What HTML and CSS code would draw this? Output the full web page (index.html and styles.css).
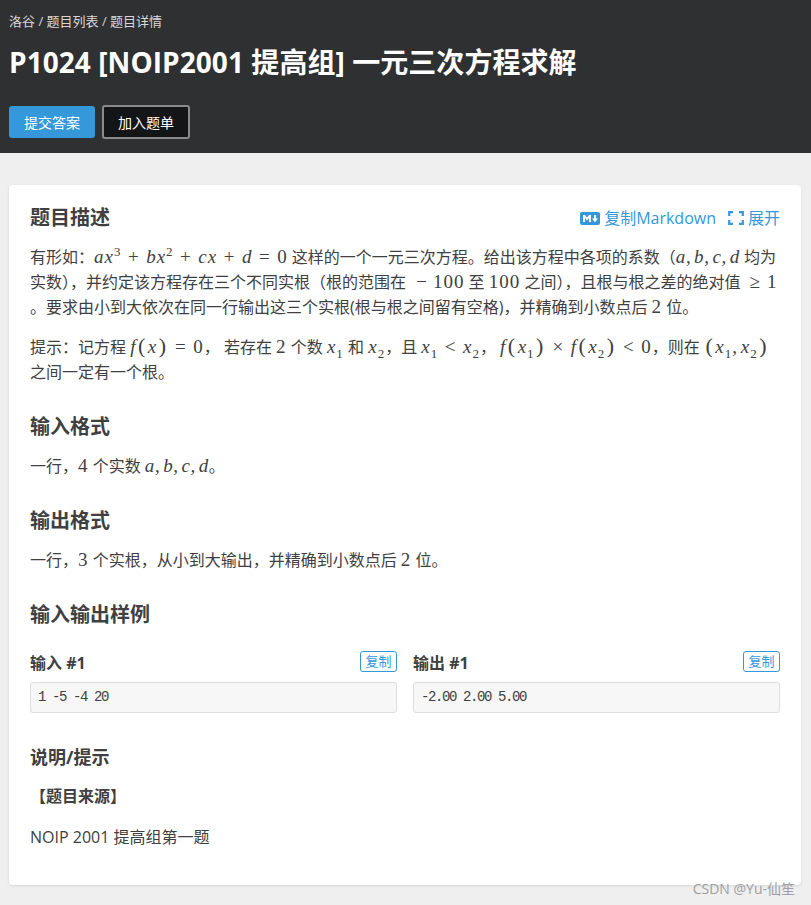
FILE: index.html
```html
<!DOCTYPE html>
<html lang="zh-CN">
<head>
    <meta charset="UTF-8">
    <meta name="viewport" content="width=device-width, initial-scale=1.0">
    <title>P1024 一元三次方程求解</title>
    <link rel="stylesheet" href="styles.css">
</head>
<body>
    <header class="top">
        <div class="crumbs">洛谷 / 题目列表 / 题目详情</div>
        <h1>P1024 [NOIP2001 提高组] 一元三次方程求解</h1>
        <div class="top-buttons">
            <button class="btn btn-blue">提交答案</button>
            <button class="btn btn-dark">加入题单</button>
        </div>
    </header>

    <main class="card">
        <div class="title-row">
            <h2>题目描述</h2>
            <div class="tools">
                <span class="tool">
                    <svg class="md-icon" width="20" height="13" viewBox="0 0 20 13">
                        <rect width="20" height="13" rx="2" fill="#3498db"/>
                        <path d="M3 10V3h2l2 2.5L9 3h2v7H9V6L7 8.5 5 6v4z" fill="#fff"/>
                        <path d="M14 3h2v3.5h2l-3 3.7-3-3.7h2z" fill="#fff"/>
                    </svg>
                    复制Markdown
                </span>
                <span class="tool">
                    <svg width="16" height="14" viewBox="0 0 16 14">
                        <path d="M5 1.2H1.2V5M11 1.2h3.8V5M5 12.8H1.2V9M11 12.8h3.8V9" fill="none" stroke="#3498db" stroke-width="2.2"/>
                    </svg>
                    展开
                </span>
            </div>
        </div>
        <p>有形如&#65306;<span class="m">ax<sup>3</sup><b>+</b>bx<sup>2</sup><b>+</b>cx<b>+</b>d<b>=</b><i>0</i></span> 这样的一个一元三次方程。给出该方程中各项的系数&#65288;<span class="m tight">a, b, c, d</span> 均为<br>实数&#65289;&#65292;并约定该方程存在三个不同实根&#65288;根的范围在 <span class="m"><b class="neg">−</b><i>100</i></span> 至 <span class="m"><i>100</i></span> 之间&#65289;&#65292;且根与根之差的绝对值 <span class="m"><b class="rel">≥</b><i>1</i></span><br>。要求由小到大依次在同一行输出这三个实根(根与根之间留有空格)&#65292;并精确到小数点后 <span class="m"><i>2</i></span> 位。</p>
        <p>提示&#65306;记方程 <span class="m">f<i class="p">(</i>x<i class="p">)</i><b>=</b><i>0</i></span>&#65292; 若存在 <span class="m"><i>2</i></span> 个数 <span class="m">x<sub>1</sub></span> 和 <span class="m">x<sub>2</sub></span>&#65292;且 <span class="m">x<sub>1</sub><b>&lt;</b>x<sub>2</sub></span>&#65292; <span class="m">f<i class="p">(</i>x<sub>1</sub><i class="p">)</i><b>×</b>f<i class="p">(</i>x<sub>2</sub><i class="p">)</i><b>&lt;</b><i>0</i></span>&#65292;则在 <span class="m"><i class="p">(</i>x<sub>1</sub>, x<sub>2</sub><i class="p">)</i></span><br>之间一定有一个根。</p>

        <h2>输入格式</h2>
        <p>一行&#65292;<span class="m"><i>4</i></span> 个实数 <span class="m tight">a, b, c, d</span>。</p>

        <h2>输出格式</h2>
        <p>一行&#65292;<span class="m"><i>3</i></span> 个实根&#65292;从小到大输出&#65292;并精确到小数点后 <span class="m"><i>2</i></span> 位。</p>

        <h2 class="sample-title">输入输出样例</h2>
        <div class="samples">
            <div class="sample">
                <div class="sample-head">
                    <h3>输入 #1</h3>
                    <span class="copy">复制</span>
                </div>
                <pre>1 -5 -4 20</pre>
            </div>
            <div class="sample">
                <div class="sample-head">
                    <h3>输出 #1</h3>
                    <span class="copy">复制</span>
                </div>
                <pre>-2.00 2.00 5.00</pre>
            </div>
        </div>

        <h2 class="small-h">说明/提示</h2>
        <p class="source"><strong>【题目来源】</strong></p>
        <p>NOIP 2001 提高组第一题</p>
    </main>

    <div class="watermark">CSDN @Yu-仙笙</div>
</body>
</html>
```

FILE: styles.css
```css
/* base */
body {
    margin: 0;
    position: relative;
    min-height: 905px;
    background: #efefef;
    color: #404040;
    font-family: "Open Sans", "Noto Sans CJK SC", sans-serif;
    font-size: 16px;
    line-height: 25px;
    overflow: hidden;
}

/* header */
.top {
    height: 153px;
    box-sizing: border-box;
    padding: 9px 9px 0;
    background: #2f3032;
    color: #fff;
}

.crumbs {
    height: 24px;
    font-size: 13px;
    line-height: 24px;
    color: #d8d8d8;
}

h1 {
    margin: 8px 0 0;
    font-size: 28px;
    line-height: 42px;
    font-weight: 700;
    letter-spacing: 0.06px;
}

.top-buttons {
    display: flex;
    align-items: center;
    gap: 7px;
    margin-top: 22px;
}

.btn {
    height: 32px;
    padding: 0;
    border: none;
    border-radius: 3px;
    color: #fff;
    font-family: inherit;
    font-size: 14px;
}

.btn-blue { width: 86px; background: #3498db; }

.btn-dark {
    width: 88px;
    height: 34px;
    background: #141516;
    border: 2px solid #8a8a8a;
}

/* card */
.card {
    margin: 32px 10px 0 9px;
    height: 700px;
    box-sizing: border-box;
    padding: 18px 21px 0;
    background: #fff;
    border-radius: 4px;
    box-shadow: 0 1px 3px rgba(0, 0, 0, 0.1);
}

h2 {
    margin: 27px 0 12px;
    font-size: 20px;
    line-height: 30px;
    font-weight: 700;
    color: #404040;
}

.sample-title { margin-top: 27px; }

.small-h { margin-top: 29px; font-size: 18px; }

.title-row {
    display: flex;
    justify-content: space-between;
    align-items: center;
    margin-bottom: 12px;
}

.title-row h2 { margin: 0; }

.tools {
    display: flex;
    gap: 12px;
    color: #3498db;
    font-size: 16px;
}

.tool {
    display: inline-flex;
    align-items: center;
    gap: 4px;
}

p { margin: 0 0 15px; }

/* formulas */
.m {
    font-family: "Liberation Serif", serif;
    font-style: italic;
    font-size: 19px;
    line-height: 0;
    letter-spacing: 1px;
    word-spacing: -3px;
    white-space: nowrap;
}

.m.tight { letter-spacing: 0.6px; word-spacing: -2.5px; }

.m i { font-style: normal; }
.m i.p { font-size: 22px; margin: 0 1.5px; }
.m b { font-style: normal; font-weight: 400; margin: 0 6.5px; }
.m b.neg { margin: 0 5px 0 6px; }
.m b.rel { margin: 0 6px 0 5px; }
.m sup, .m sub { font-style: normal; font-size: 13px; line-height: 0; }

/* samples */
.samples {
    display: grid;
    grid-template-columns: 1fr 1fr;
    gap: 16px;
    margin-top: 17px;
}

.sample-head {
    display: flex;
    justify-content: space-between;
    align-items: flex-start;
    height: 35px;
}

h3 {
    margin: 4px 0 0;
    font-size: 16px;
    line-height: 24px;
    font-weight: 700;
}

.copy {
    margin-top: 4px;
    width: 35px;
    height: 19px;
    border: 1px solid #3498db;
    border-radius: 3px;
    color: #3498db;
    font-size: 13px;
    line-height: 18px;
    text-align: center;
}

pre {
    margin: 0;
    height: 31px;
    box-sizing: border-box;
    padding: 0 7px;
    background: #f7f7f7;
    border: 1px solid #dedede;
    border-radius: 3px;
    font-family: "Liberation Mono", monospace;
    font-size: 14px;
    letter-spacing: -1.4px;
    line-height: 29px;
}

.source { margin-bottom: 16px; }

.watermark {
    position: absolute;
    right: 16px;
    top: 879px;
    color: #a0a0a0;
    font-size: 14px;
    line-height: 20px;
}
```
